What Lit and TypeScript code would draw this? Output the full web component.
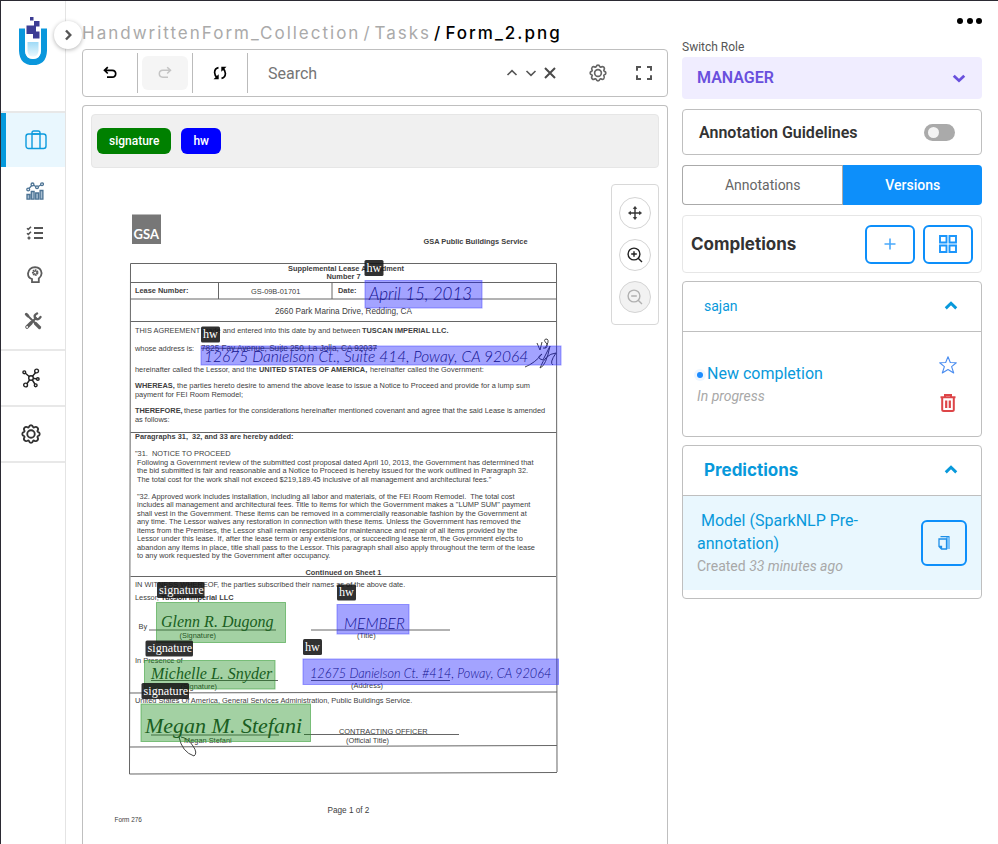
import { LitElement, html, svg, css } from "lit";
import { customElement, property, state } from "lit/decorators.js";
import { classMap } from "lit/directives/class-map.js";

/* ---------- icons ---------- */

const gearPath =
  "M9.500 3.800Q10 1.500 12 1.500T14.500 3.800L15.500 4.300Q18 2.700 19.700 4.300T19.700 8.500L20.200 9.500Q22.500 10 22.500 12T20.200 14.500L19.700 15.500Q21.300 18 19.700 19.700T15.500 19.700L14.500 20.200Q14 22.500 12 22.500T9.500 20.200L8.500 19.700Q6 21.300 4.300 19.700T4.300 15.500L3.800 14.500Q1.500 14 1.500 12T3.800 9.500L4.300 8.500Q2.700 6 4.300 4.300T8.500 4.300Z";

const icons = {
  briefcase: html`<svg width="22" height="20" viewBox="0 0 22 20" fill="none" stroke="#0c9bdd" stroke-width="1.4">
    <rect x="1" y="4" width="20" height="14.5" rx="2.5"/><path d="M7 18.5V2.8Q7 1 8.800 1h4.400Q15 1 15 2.800V18.500M7 4h8"/></svg>`,
  chart: html`<svg width="18" height="18" viewBox="0 0 18 18" fill="#a9bfd2" stroke="#4c7394" stroke-width="1.3">
    <path d="M1 12.500h2.800v4.600H1zM5.300 9.500h2.800v7.600H5.300zM9.700 11h2.800v6.100H9.700zM14.100 8.500h2.800v8.600h-2.800z"/>
    <path fill="none" d="M2.200 7.500 6.500 2.500 11 5.300 16 2.300"/>
    <g fill="#fff"><circle cx="2.200" cy="7.500" r="1.400"/><circle cx="6.500" cy="2.400" r="1.400"/><circle cx="11" cy="5.300" r="1.400"/><circle cx="16" cy="2.200" r="1.400"/></g></svg>`,
  list: html`<svg width="18" height="14" viewBox="0 0 18 14" fill="none" stroke="#555" stroke-width="1.500">
    <path stroke-width="2" d="M8 2h9M8 7h9M8 12h9"/><path d="M1 2.200l1.300 1.200L5 .700M1 7.200l1.300 1.200L5 5.700"/><path stroke-width="1.600" d="M1.500 12h3M3 10.500v3"/></svg>`,
  head: html`<svg width="16" height="18" viewBox="0 0 16 18" fill="none" stroke="#5c5c5c" stroke-width="1.800">
    <path d="M5 16.200V13Q1 12 1 7.500 2 1.500 8 1.200q6 .300 6.600 6 0 3-2.800 5.300v3.700z"/><circle cx="8.200" cy="6.600" r="2.300" stroke-width="2" stroke-dasharray="1.400 .500"/><circle cx="8.200" cy="6.600" r="1.600" stroke-width="1"/></svg>`,
  tools: html`<svg width="18" height="18" viewBox="0 0 18 18" fill="none" stroke="#5e5e5e" stroke-linecap="round">
    <path stroke-width="3.200" d="M11.500 11.500l4 4"/><path stroke-width="1.800" d="M3 3l9 9"/><path stroke-width="3" d="M2.300 2.300l1.500 1.500"/>
    <path stroke-width="3.600" d="M3 15l4-4"/><path stroke-width="2.200" d="M7 11l5-5"/><path stroke-width="2.400" d="M13 1.500Q9.500 3 11.300 6.500 14.500 8.500 16.500 5"/><circle cx="3" cy="15" r=".5" stroke="#fff" stroke-width="1"/></svg>`,
  network: html`<svg width="18" height="20" viewBox="0 0 18 20" fill="#fff" stroke="#222" stroke-width="1.400">
    <path d="M9 10 2.500 4.500M9 10 14.500 3.500M9 10l6.500 1M9 10l-5 7M9 10l4.500 7"/><circle cx="9" cy="10" r="2.300"/><circle cx="2.300" cy="4.300" r="1.400"/>
    <circle cx="14.600" cy="3" r="1.900"/><circle cx="15.800" cy="11" r="1.300"/><circle cx="3.600" cy="17" r="1.900"/><circle cx="13.700" cy="17.300" r="1.400"/></svg>`,
  gear: html`<svg class="gear" viewBox="0 0 24 24" fill="none" stroke="currentColor" stroke-width="2.200" stroke-linejoin="round">
    <path d=${gearPath}/><circle cx="12" cy="12" r="4.500"/></svg>`,
  undo: html`<svg width="14" height="14" viewBox="0 0 14 14" fill="none" stroke="currentColor" stroke-width="1.700"><path d="M4.800 1.200 1.500 4.300l3.300 3.200M1.500 4.300h7.700q3.500.2 3.500 3.400T9.200 11.200H4"/></svg>`,
  redo: html`<svg width="14" height="14" viewBox="0 0 14 14" fill="none" stroke="currentColor" stroke-width="1.500"><path d="M9.200 1.200l3.300 3.100-3.300 3.200M12.500 4.300H4.800Q1.300 4.500 1.300 7.700t3.500 3.500H10"/></svg>`,
  sync: html`<svg width="14" height="14" viewBox="0 0 14 14" fill="none" stroke="#000" stroke-width="1.700"><path d="M5.500 1.700Q1.700 2.500 1.600 6.500 1.700 9.500 4 11.500M8.500 12.300q3.800-.8 3.900-4.800Q12.300 4.500 10 2.500"/><path fill="#000" stroke="none" d="M.500 13.200h5.200V8.300zM13.500.8H8.300v4.900z"/></svg>`,
  fit: html`<svg width="16" height="14" viewBox="0 0 16 14" fill="none" stroke="#555" stroke-width="2"><path d="M1 4.800V1h4M11 1h4v3.800M15 9.200V13h-4M5 13H1V9.200"/></svg>`,
  cross: html`<svg width="12" height="12" viewBox="0 0 12 12" fill="none" stroke="#4a4a4a" stroke-width="2"><path d="M1 1l10 10M11 1 1 11"/></svg>`,
  move: html`<svg width="14" height="14" viewBox="0 0 14 14" fill="#333" stroke="#333" stroke-width="1.400"><path d="M7 1.500v11M1.500 7h11"/><path stroke-width=".8" d="M7 .5l1.600 2H5.400zM7 13.500l1.600-2H5.400zM.5 7l2-1.600v3.200zM13.500 7l-2-1.600v3.200z"/></svg>`,
  star: html`<svg width="18" height="18" viewBox="0 0 18 18" fill="none" stroke="#4a8df0" stroke-width="1.100" stroke-linejoin="round"><path d="M9 .8l2.300 5.700 6 .3-4.700 3.800 2.100 6.400L9 13.500 3.300 17l2.100-6.400L.7 6.800l6-.3z"/></svg>`,
  trash: html`<svg width="16" height="18" viewBox="0 0 16 18" fill="none" stroke="#dd4548" stroke-width="2"><path d="M.5 3.300h15M5 3V1h6v2M2.200 4v11.500Q2.200 17 3.700 17h8.600q1.500 0 1.500-1.500V4"/><path d="M6.200 6.500V14M9.800 6.500V14" stroke-width="2.200"/></svg>`,
  plus: html`<svg width="12" height="12" viewBox="0 0 12 12" fill="none" stroke="#4aa9fb" stroke-width="1.600"><path d="M6 .5v11M.5 6h11"/></svg>`,
  grid: html`<svg width="18" height="18" viewBox="0 0 18 18" fill="none" stroke="#1c96fb" stroke-width="1.900"><path d="M1 1h6.500v6.500H1zM10.500 1H17v6.500h-6.500zM1 10.500h6.500V17H1zM10.500 10.500H17V17h-6.500z"/></svg>`,
  copy: html`<svg width="12" height="14" viewBox="0 0 12 14" fill="none"><path fill="#7cc3fb" d="M8 1h4v12H8z"/><path stroke="#1e8fe8" stroke-width="1.300" d="M2.500.7h9M8.500 3H1v7.500L3.500 13h5zM1 10.500h2.500V13"/></svg>`,
  logo: html`<svg width="28" height="50" viewBox="0 0 28 50">
    <defs><linearGradient id="fill" x1="0" y1="0" x2="0" y2="1"><stop offset="0" stop-color="#9fdaf6"/><stop offset="1" stop-color="#e9f8fe"/></linearGradient></defs>
    <path d="M3 12.500V34.500Q3.500 46 14 46t11-11.500V12.500" fill="none" stroke="#0a97dc" stroke-width="6"/>
    <path d="M6 12.500h16V34.500Q21.500 43 14 43T6 34.500z" fill="#fff"/>
    <path d="M8.500 26h11v9q-.5 5.500-5.500 5.500T8.500 35z" fill="url(#fill)"/>
    <path fill="#3d3d94" d="M11 1h3.500v3.500H11zM15 5H20.500v5.500H17v5h3.500v7H14V18H7.500v-8.500h7.500z"/></svg>`,
};

const chevron = (dir: "up" | "down" | "right", size: number, weight: number) => {
  const d = { up: "M1.500 8 6 3.700 10.500 8", down: "M1.500 4 6 8.300 10.500 4", right: "M4 1.500 8.300 6 4 10.500" }[dir];
  return html`<svg width=${size} height=${size} viewBox="0 0 12 12" fill="none" stroke="currentColor" stroke-width=${weight}><path d=${d}></path></svg>`;
};

const magnifier = (plus: boolean) => html`<svg width="16" height="16" viewBox="0 0 16 16" fill="none" stroke="currentColor" stroke-width="1.400">
  <circle cx="7" cy="7" r="5.900"/><path d="M11.200 11.200l3.800 3.800M4.200 7h5.600"/>${plus ? svg`<path d="M7 4.200v5.600"/>` : ""}</svg>`;

/* ---------- scanned page ---------- */

/* Positions are kept on a coarse grid; type is set on one five times finer. */
const FINE = 5;

type Line = [x: number, y: number, text: string, style?: string];

const printed: Line[] = [
  [847, 487, "GSA Public Buildings Service", "bold"],
  [576, 541, "Supplemental Lease Amendment", "bold"],
  [653, 557, "Number 7", "bold"],
  [270, 586, "Lease Number:", "bold"],
  [502, 587, "GS-09B-01701"],
  [676, 586, "Date:", "bold"],
  [550, 627, "2660 Park Marina Drive, Redding, CA", "large"],
  [270, 665, "THIS AGREEMENT made and entered into this date by and between"],
  [724, 665, "TUSCAN IMPERIAL LLC.", "bold"],
  [270, 701, "whose address is:"],
  [402, 701, "7825 Fay Avenue, Suite 250, La Jolla, CA 92037", "struck"],
  [270, 743, "hereinafter called the Lessor, and the"],
  [518, 743, "UNITED STATES OF AMERICA,", "bold"],
  [740, 743, "hereinafter called the Government:"],
  [270, 775, "WHEREAS,", "bold"],
  [354, 775, "the parties hereto desire to amend the above lease to issue a Notice to Proceed and provide for a lump sum"],
  [270, 793, "payment for FEI Room Remodel;"],
  [270, 826, "THEREFORE,", "bold"],
  [368, 826, "these parties for the considerations hereinafter mentioned covenant and agree that the said Lease is amended"],
  [270, 843, "as follows:"],
  [270, 878, "Paragraphs 31,  32, and 33 are hereby added:", "bold"],
  [270, 912, "\"31.  NOTICE TO PROCEED"],
  [274, 929, "Following a Government review of the submitted cost proposal dated April 10, 2013, the Government has determined that"],
  [274, 946, "the bid submitted is fair and reasonable and a Notice to Proceed is hereby issued for the work outlined in Paragraph 32."],
  [274, 963, "The total cost for the work shall not exceed $219,189.45 inclusive of all management and architectural fees.\""],
  [274, 997, "\"32. Approved work includes installation, including all labor and materials, of the FEI Room Remodel.  The total cost"],
  [274, 1014, "includes all management and architectural fees. Title to items for which the Government makes a \"LUMP SUM\" payment"],
  [274, 1031, "shall vest in the Government. These items can be removed in a commercially reasonable fashion by the Government at"],
  [274, 1048, "any time. The Lessor waives any restoration in connection with these items. Unless the Government has removed the"],
  [274, 1065, "items from the Premises, the Lessor shall remain responsible for maintenance and repair of all items provided by the"],
  [274, 1082, "Lessor under this lease. If, after the lease term or any extensions, or succeeding lease term, the Government elects to"],
  [274, 1099, "abandon any items in place, title shall pass to the Lessor. This paragraph shall also apply throughout the term of the lease"],
  [274, 1116, "to any work requested by the Government after occupancy."],
  [611, 1149, "Continued on Sheet 1", "bold"],
  [270, 1174, "IN WITNESS WHEREOF, the parties subscribed their names as of the above date."],
  [270, 1199, "Lessor,"],
  [322, 1199, "Tucson Imperial LLC", "bold"],
  [277, 1258, "By"],
  [359, 1275, "(Signature)"],
  [714, 1275, "(Title)"],
  [270, 1326, "In Presence of"],
  [361, 1377, "(Signature)"],
  [702, 1376, "(Address)"],
  [270, 1405, "United States Of America, General Services Administration, Public Buildings Service."],
  [678, 1467, "CONTRACTING OFFICER"],
  [368, 1486, "Megan Stefani"],
  [692, 1485, "(Official Title)"],
  [655, 1626, "Page 1 of 2", "large"],
  [229, 1644, "Form 276", "small"],
];

const handwritten: Line[] = [
  [738, 600, "April 15, 2013", "hand date"],
  [408, 724, "12675 Danielson Ct., Suite 414, Poway, CA 92064", "hand street"],
  [688, 1258, "MEMBER", "hand street"],
  [620, 1356, "12675 Danielson Ct. #414, Poway, CA 92064", "hand address"],
  [322, 1254, "Glenn R. Dugong", "sign small-sign"],
  [302, 1358, "Michelle L. Snyder", "sign small-sign"],
  [290, 1466, "Megan M. Stefani", "sign large-sign"],
];

type Region = { label: "hw" | "signature"; x: number; y: number; w: number; h: number; tagX: number; tagY: number };

const regions: Region[] = [
  { label: "hw", x: 730, y: 561, w: 234, h: 55, tagX: 729, tagY: 520 },
  { label: "hw", x: 402, y: 692, w: 720, h: 38, tagX: 402, tagY: 653 },
  { label: "signature", x: 313, y: 1205, w: 258, h: 80, tagX: 314, tagY: 1164 },
  { label: "hw", x: 674, y: 1209, w: 144, h: 59, tagX: 674, tagY: 1169 },
  { label: "signature", x: 289, y: 1321, w: 261, h: 57, tagX: 291, tagY: 1281 },
  { label: "hw", x: 606, y: 1318, w: 511, h: 51, tagX: 606, tagY: 1278 },
  { label: "signature", x: 282, y: 1408, w: 339, h: 75, tagX: 283, tagY: 1366 },
];

@customElement("scanned-page")
class ScannedPage extends LitElement {
  static styles = css`
    :host { display: block; }
    svg { display: block; width: 100%; }
    text { font-family: "Liberation Sans", Arial, sans-serif; font-size: 74px; fill: #404040; white-space: pre; }
    .bold { font-weight: 700; }
    .large { font-size: 82px; }
    .small { font-size: 64px; }
    .struck { font-size: 82px; text-decoration: line-through; }
    .hand { font-family: Lato, sans-serif; font-style: italic; font-weight: 300; fill: #23234f; }
    .date { font-size: 170px; }
    .street { font-size: 155px; }
    .address { font-size: 127px; }
    .sign { font-family: "Liberation Serif", serif; font-style: italic; fill: #2c4c34; }
    .small-sign { font-size: 160px; }
    .large-sign { font-size: 220px; }
    .rules { fill: none; stroke: #666; stroke-width: 2; }
    .pen { fill: none; stroke: #444; stroke-width: 2; }
    .seal { fill: #777; }
    .seal-text { font-family: Lato, sans-serif; font-size: 130px; font-weight: 700; fill: #fff; }
    .hw { fill: rgba(0, 0, 255, 0.36); stroke: rgba(70, 70, 255, 0.5); stroke-width: 2; }
    .signature { fill: rgba(0, 128, 0, 0.36); stroke: rgba(60, 160, 60, 0.6); stroke-width: 2; }
    .tag { fill: rgba(20, 20, 20, 0.88); }
    .tag-text { font-family: "Liberation Serif", serif; font-size: 122px; fill: #fff; }
  `;

  render() {
    const line = ([x, y, text, style = ""]: Line) => svg`<text class=${style} x=${x * FINE} y=${y * FINE}>${text}</text>`;
    return html`<svg viewBox="910 1680 5680 6760" role="img" aria-label="Form_2.png, page 1 of 2">
      <g transform="scale(${FINE})">
        <rect class="seal" x="264" y="429" width="58" height="59"/>
        <path class="rules" d="M261 527H1113M261 565H1113M261 598H1113M261 643H1113M437 565V598M664 565V598M261 865H1113M261 1153H1112M259 1386L1114 1384M259 1494L1114 1491M259 1548L1114 1545M261 527L259 1548M1113 527L1114 1544"/>
        <path class="rules" d="M298 1260H552M622 1260H900M302 1361H556M622 1361H900M302 1470H558M608 1469H918"/>
        <path class="pen" d="M358 1474q6 30 30 38 8-6-2-20-10-16-24-18M1074 686l6 14 4-16M1090 696q10-14 4-18-10 0 0 10 2 10-8 8M1050 734q20-8 34-26-14 8 2 12l14-28q-8 40-20 44 10-28 32-30-14 20-6 24"/>
      </g>
      <text class="seal-text" x=${267 * FINE} y=${478 * FINE}>GSA</text>
      ${printed.map(line)}
      ${handwritten.map(line)}
      <g transform="scale(${FINE})">
        ${regions.map((r) => svg`
          <rect class=${r.label} x=${r.x} y=${r.y} width=${r.w} height=${r.h}/>
          <rect class="tag" x=${r.tagX} y=${r.tagY} width=${r.label === "hw" ? 38 : 95} height="32" rx="3"/>`)}
      </g>
      ${regions.map((r) => line([r.tagX + 4, r.tagY + 23, r.label, "tag-text"]))}
    </svg>`;
  }
}

@customElement("side-nav")
class SideNav extends LitElement {
  static styles = css`
    :host { display: block; width: 64px; border-right: 1px solid #e4e4e4; }
    .logo { display: flex; height: 112px; padding: 15px 18px 0; box-sizing: border-box; border-bottom: 2px solid #e8e8e8; }
    a { display: flex; align-items: center; justify-content: center; color: #333; }
    .active { height: 54px; background: #e9f7fe; border-left: 5px solid #0599dc; box-sizing: border-box; }
    .group { display: flex; flex-direction: column; padding: 3px 0 7px 4px; border-bottom: 2px solid #e8e8e8; }
    .group a { height: 42px; }
    .group a:last-child { height: 46px; padding: 4px 4px 0 0; box-sizing: border-box; }
    .single { height: 54px; padding-right: 4px; border-bottom: 2px solid #e8e8e8; }
    .gear { width: 20px; height: 20px; }
  `;
  render() {
    return html`<nav aria-label="Main">
      <div class="logo">${icons.logo}</div>
      <a class="active" href="#projects" aria-label="Projects">${icons.briefcase}</a>
      <div class="group">
        <a href="#analytics" aria-label="Analytics">${icons.chart}</a>
        <a href="#tasks" aria-label="Tasks">${icons.list}</a>
        <a href="#models" aria-label="Models">${icons.head}</a>
        <a href="#setup" aria-label="Setup">${icons.tools}</a>
      </div>
      <a class="single" href="#hub" aria-label="Hub">${icons.network}</a>
      <a class="single" href="#settings" aria-label="Settings">${icons.gear}</a>
    </nav>`;
  }
}

@customElement("fold-card")
class FoldCard extends LitElement {
  @property() heading = "";
  @property({ type: Boolean }) strong = false;
  @state() private open = true;

  static styles = css`
    :host { display: block; border: 1px solid #bfbfbf; border-radius: 4px; }
    button { display: flex; align-items: center; justify-content: space-between; width: 100%; height: 49px; padding: 0 23px 2px 21px;
      border: 0; background: none; color: #0899db; font: 400 14px Roboto, sans-serif; }
    .strong { font: 700 17px Inter, sans-serif; }
    .body { border-top: 1px solid #bfbfbf; }
  `;
  render() {
    return html`<button class=${classMap({ strong: this.strong })} aria-expanded=${this.open} @click=${() => (this.open = !this.open)}>
        <span>${this.heading}</span>${chevron(this.open ? "up" : "down", 14, 2.5)}
      </button>
      ${this.open ? html`<div class="body"><slot></slot></div>` : ""}`;
  }
}

@customElement("app-root")
class AppRoot extends LitElement {
  static styles = css`
    :host { display: flex; height: 100vh; box-sizing: border-box; overflow: hidden; border-top: 1px solid #2b2a33; border-left: 1px solid #2b2a33;
      background: #fff; color: #333; font-family: Roboto, sans-serif; }
    button { padding: 0; border: 0; background: none; font: inherit; color: inherit; display: flex; align-items: center; justify-content: center; }
    side-nav { flex: none; }
    main { flex: 1; min-width: 0; display: flex; flex-direction: column; padding: 20px 0 0 16px; position: relative; }
    .expand { position: absolute; left: -12px; top: 20px; width: 28px; height: 28px; border-radius: 50%; background: #fff; color: #555; box-shadow: 0 1px 4px rgba(0, 0, 0, 0.3); }
    .crumbs { display: flex; gap: 3px; height: 24px; font: 500 17px/24px Inter, sans-serif; letter-spacing: 2px; color: #000; white-space: nowrap; margin-bottom: 4px; }
    .crumbs a, .crumbs .sep { color: #aaa; text-decoration: none; font-weight: 400; }
    .toolbar { display: flex; align-items: center; height: 46px; border: 1px solid #bfbfbf; border-radius: 4px; margin-bottom: 8px; flex: none; }
    .cell { display: flex; width: 54px; height: 40px; border-right: 1px solid #bbb; align-items: center; justify-content: center; color: #000; }
    .cell button { width: 46px; height: 34px; border-radius: 6px; }
    .cell button:disabled { background: #f5f5f5; color: #c4c4c4; }
    .toolbar input { flex: 1; min-width: 0; border: 0; outline: 0; padding: 0 20px; font: 400 16px Roboto, sans-serif; color: #333; }
    .toolbar input::placeholder { color: #757575; opacity: 1; }
    .find { display: flex; gap: 7px; align-items: center; color: #555; margin-right: 33px; }
    .options { display: flex; gap: 29px; align-items: center; color: #666; margin-right: 15px; }
    .gear { width: 18px; height: 18px; }
    .viewer { flex: 1; min-height: 0; border: 1px solid #bfbfbf; border-bottom: 0; border-radius: 4px 4px 0 0; padding: 8px 8px 0; }
    .tags { display: flex; gap: 10px; padding: 13px 5px; background: #f0f0f0; border: 1px solid #e6e6e6; border-radius: 4px; }
    .tags button { height: 26px; padding: 0 12px; border-radius: 6px; color: #fff; font: 500 12px Roboto, sans-serif; }
    .tag-signature { background: #008000; }
    .tag-hw { background: #0000ff; }
    .sheet { position: relative; }
    .zoom { position: absolute; top: 16px; right: 0; display: flex; flex-direction: column; gap: 10px; padding: 12px 7px 11px; border: 1px solid #d8d8d8; border-radius: 4px; background: #fff; }
    .zoom button { width: 32px; height: 32px; box-sizing: border-box; border: 1px solid #d4d4d4; border-radius: 50%; color: #222; }
    .zoom button:disabled { background: #f2f2f2; color: #b0b0b0; }

    aside { flex: none; width: 300px; padding: 14px 16px 0 14px; }
    .more { margin: 0 0 0 auto; width: 25px; height: 12px; justify-content: space-between; }
    .dot { width: 6px; height: 6px; border-radius: 50%; background: #000; }
    .role-label { display: block; margin-top: 13px; height: 17px; font-size: 12px; line-height: 14px; color: #555; }
    .role { position: relative; display: flex; align-items: center; color: #6950dd; }
    .role select { appearance: none; width: 100%; height: 42px; padding: 0 15px 2px; border: 0; border-radius: 4px; background: #f0edff; color: #6950dd; font: 600 16px Roboto, sans-serif; }
    .role svg { position: absolute; right: 16px; }
    .box { display: flex; align-items: center; box-sizing: border-box; border: 1px solid #bfbfbf; border-radius: 4px; }
    .guidelines { justify-content: space-between; height: 46px; margin-top: 10px; padding: 0 26px 0 16px; font-size: 16px; font-weight: 600; }
    .guidelines input { appearance: none; display: flex; width: 31px; height: 17px; margin: 0; padding: 3px; box-sizing: border-box; border-radius: 9px; background: #aaa; }
    .guidelines input::before { content: ""; width: 11px; height: 11px; border-radius: 50%; background: #f4f4f4; margin-left: 1px; }
    .guidelines input:checked { background: #0d8ffa; justify-content: flex-end; }
    .tabs { display: flex; margin-top: 10px; font-size: 14px; }
    .tabs button { height: 40px; box-sizing: border-box; }
    .tab-a { flex: 160; border: 1px solid #aaa; border-right: 0; border-radius: 4px 0 0 4px; color: #666; }
    .tab-v { flex: 139; border-radius: 0 4px 4px 0; background: #0d8ffa; color: #fff; font-weight: 500; border-left: 1px solid #aaa; }
    .completions { height: 58px; margin-top: 10px; padding: 0 8px; gap: 8px; border-color: #e6e6e6; }
    .completions h2 { flex: 1; margin: 0; font: 700 17px Inter, sans-serif; }
    .outlined { box-sizing: border-box; border: 2px solid #0d8ffa; border-radius: 6px; }
    .completions .outlined { width: 50px; height: 39px; }
    fold-card { margin-top: 8px; }
    .row { display: flex; align-items: center; justify-content: space-between; }
    .entry { height: 104px; padding: 0 24px 0 14px; box-sizing: border-box; }
    .title { margin: 0; font-size: 16px; line-height: 23px; color: #0899db; font-weight: 400; }
    .bullet { display: inline-block; width: 6px; height: 6px; border-radius: 50%; background: #1c8bff; box-shadow: 0 0 0 3px #eef6ff; margin-right: 4px; vertical-align: 1px; }
    .meta { margin: 0; font-size: 14px; line-height: 22px; color: #a8a8a8; }
    .actions { display: flex; flex-direction: column; align-items: center; gap: 20px; }
    .model { height: 94px; margin-bottom: 8px; padding: 0 14px; box-sizing: border-box; background: #e9f7fe; }
    .model .title { width: 190px; text-indent: 4px; }
    .copy { width: 46px; height: 46px; }
  `;

  render() {
    return html`
      <side-nav></side-nav>
      <main>
        <button class="expand" aria-label="Expand menu">${chevron("right", 12, 2.4)}</button>
        <nav class="crumbs" aria-label="Breadcrumb"><a href="#project">HandwrittenForm_Collection</a><span class="sep">/</span><a href="#tasks">Tasks</a><span>/</span><span>Form_2.png</span></nav>
        <div class="toolbar">
          <div class="cell"><button aria-label="Undo">${icons.undo}</button></div>
          <div class="cell"><button aria-label="Redo" disabled>${icons.redo}</button></div>
          <div class="cell"><button aria-label="Reset">${icons.sync}</button></div>
          <input type="text" placeholder="Search" aria-label="Search">
          <div class="find">
            <button aria-label="Previous match">${chevron("up", 12, 1.6)}</button>
            <button aria-label="Next match">${chevron("down", 12, 1.6)}</button>
            <button aria-label="Clear">${icons.cross}</button>
          </div>
          <div class="options">
            <button aria-label="Display settings">${icons.gear}</button>
            <button aria-label="Full screen">${icons.fit}</button>
          </div>
        </div>
        <section class="viewer">
          <div class="tags">
            <button class="tag-signature">signature</button>
            <button class="tag-hw">hw</button>
          </div>
          <div class="sheet">
            <scanned-page></scanned-page>
            <div class="zoom">
              <button aria-label="Pan">${icons.move}</button>
              <button aria-label="Zoom in">${magnifier(true)}</button>
              <button aria-label="Zoom out" disabled>${magnifier(false)}</button>
            </div>
          </div>
        </section>
      </main>
      <aside>
        <button class="more" aria-label="More"><span class="dot"></span><span class="dot"></span><span class="dot"></span></button>
        <label class="role-label" for="role">Switch Role</label>
        <div class="role"><select id="role"><option>MANAGER</option></select>${chevron("down", 14, 2.4)}</div>
        <div class="box guidelines"><label for="guide">Annotation Guidelines</label><input id="guide" type="checkbox"></div>
        <div class="tabs"><button class="tab-a">Annotations</button><button class="tab-v">Versions</button></div>
        <div class="box completions">
          <h2>Completions</h2>
          <button class="outlined" aria-label="Add completion">${icons.plus}</button>
          <button class="outlined" aria-label="Compare completions">${icons.grid}</button>
        </div>
        <fold-card heading="sajan">
          <div class="row entry">
            <div><h3 class="title"><span class="bullet"></span>New completion</h3><p class="meta"><em>In progress</em></p></div>
            <div class="actions"><button aria-label="Mark as favorite">${icons.star}</button><button aria-label="Delete">${icons.trash}</button></div>
          </div>
        </fold-card>
        <fold-card heading="Predictions" strong>
          <div class="row model">
            <div><h3 class="title">Model (SparkNLP Pre-annotation)</h3><p class="meta">Created <em>33 minutes ago</em></p></div>
            <button class="outlined copy" aria-label="Copy prediction">${icons.copy}</button>
          </div>
        </fold-card>
      </aside>`;
  }
}
